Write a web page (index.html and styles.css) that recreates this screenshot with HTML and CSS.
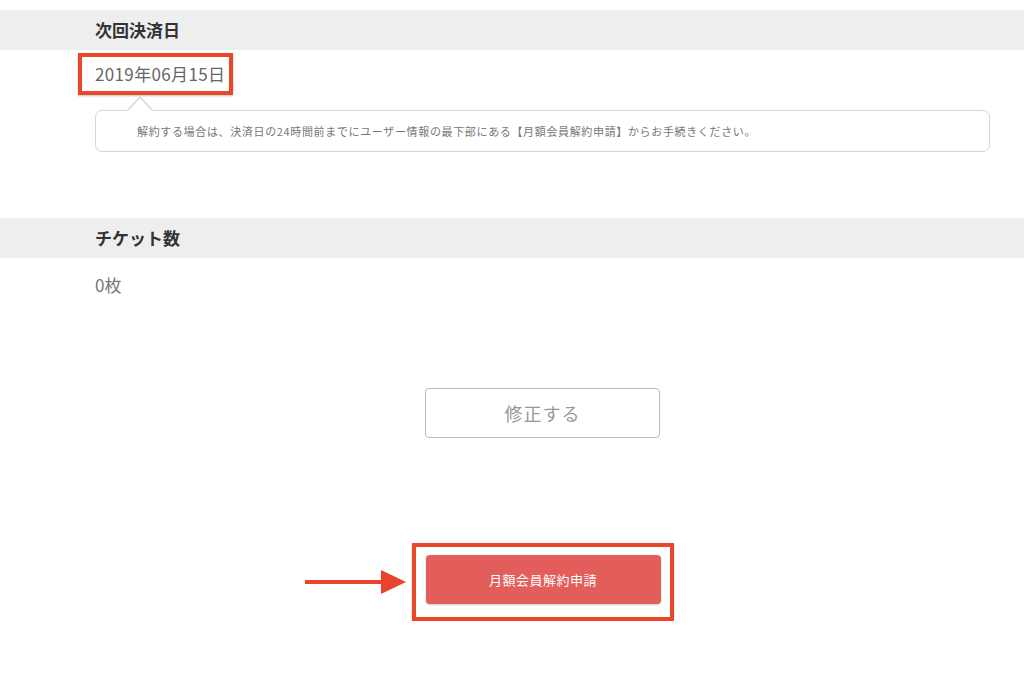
FILE: index.html
```html
<!DOCTYPE html>
<html lang="ja">
<head>
<meta charset="utf-8">
<title>次回決済日</title>
<link rel="stylesheet" href="styles.css">
</head>
<body>
<div class="page">
  <section class="section first">
    <h2 class="band"><span class="band-inner">次回決済日</span></h2>
    <div class="content">
      <div class="date-mark"><span class="date">2019年06月15日</span></div>
      <div class="notice">解約する場合は、決済日の24時間前までにユーザー情報の最下部にある【月額会員解約申請】からお手続きください。</div>
    </div>
  </section>

  <section class="section second">
    <h2 class="band"><span class="band-inner">チケット数</span></h2>
    <div class="content">
      <div class="value">0枚</div>
      <div class="actions">
        <button class="btn-edit" type="button">修正する</button>
      </div>
      <div class="cancel-row">
        <div class="cancel-mark">
          <svg class="arrow" width="102" height="26" viewBox="0 0 102 26" aria-hidden="true">
            <rect x="0" y="11" width="78" height="4" fill="#e8452c"/>
            <polygon points="76,1 101,13 76,25" fill="#e8452c"/>
          </svg>
          <button class="btn-cancel" type="button">月額会員解約申請</button>
        </div>
      </div>
    </div>
  </section>
</div>
</body>
</html>
```

FILE: styles.css
```css
* { box-sizing: border-box; }
html, body { margin: 0; padding: 0; background: #fff; }
body {
  font-family: "Noto Sans CJK JP", "Noto Sans", sans-serif;
  color: #333;
}
.page { padding-top: 10px; }
.section { margin: 0; }
.second { margin-top: 66px; }
.band {
  margin: 0;
  height: 40px;
  background: #eeeeee;
  padding-left: 95px;
  font-size: 17px;
  font-weight: 700;
  line-height: 40px;
  color: #333;
}
.content {
  padding: 0 34px 0 95px;
}
.date-mark {
  display: inline-block;
  margin-top: 3px;
  margin-left: -17px;
  border: 4px solid #e9462c;
  padding: 4px 4px 4px 13px;
  box-shadow: 0 1px 2px rgba(0,0,0,0.25);
}
.date {
  display: block;
  font-size: 17px;
  letter-spacing: 0.35px;
  line-height: 26px;
  color: #666;
}
.notice {
  position: relative;
  margin-top: 15px;
  height: 42px;
  border: 1px solid #d6d6d6;
  border-radius: 7px;
  padding-left: 41px;
  font-size: 11px;
  letter-spacing: 0.65px;
  line-height: 40px;
  color: #777;
}
.notice::before,
.notice::after {
  content: "";
  position: absolute;
  width: 0;
  height: 0;
  border-style: solid;
  border-color: transparent;
}
.notice::before {
  left: 31px;
  top: -15px;
  border-width: 0 13px 14px 13px;
  border-bottom-color: #d6d6d6;
}
.notice::after {
  left: 32px;
  top: -13px;
  border-width: 0 12px 13px 12px;
  border-bottom-color: #fff;
}
.value {
  margin-top: 14px;
  font-size: 17px;
  line-height: 26px;
  color: #777;
}
.actions {
  display: flex;
  justify-content: center;
  margin-top: 90px;
}
.btn-edit {
  width: 235px;
  height: 50px;
  background: #fff;
  border: 1.5px solid #bbbbbb;
  border-radius: 4px;
  font-family: inherit;
  font-size: 18px;
  letter-spacing: 1px;
  color: #999;
  padding: 0;
}
.cancel-row {
  display: flex;
  justify-content: center;
  margin-top: 105px;
}
.cancel-mark {
  position: relative;
  border: 4px solid #e9462c;
  padding: 8px 9px 13px 10px;
  box-shadow: 0 1px 2px rgba(0,0,0,0.25);
}
.arrow {
  position: absolute;
  left: -111px;
  top: 22px;
}
.btn-cancel {
  display: block;
  width: 235px;
  height: 49px;
  background: #e35d5a;
  border: none;
  border-radius: 4px;
  box-shadow: 0 1px 2px rgba(0,0,0,0.2);
  font-family: inherit;
  font-size: 13px;
  letter-spacing: 0.5px;
  color: #fff;
  padding: 0;
}
```
